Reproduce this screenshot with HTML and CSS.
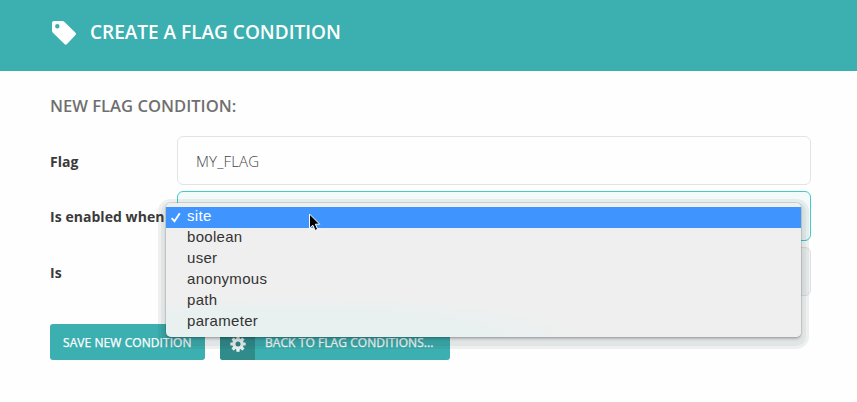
FILE: index.html
```html
<!DOCTYPE html>
<html lang="en">
<head>
<meta charset="utf-8">
<title>Create a flag condition</title>
<link rel="stylesheet" href="styles.css">
</head>
<body>
<header class="topbar">
  <svg class="tag" width="26" height="26" viewBox="0 0 26 26"><path fill="#fff" fill-rule="evenodd" d="M3 1h8.200q1.400 0 2.300.9l11 10.800q1.100 1.200 0 2.300l-8.700 9.300q-1 .9-2.100 0L1.900 12.800Q1 11.900 1 10.600V3q0-2 2-2zM6.300 4a2.200 2.200 0 1 0 0 4.400 2.200 2.200 0 0 0 0-4.400z"/></svg>
  <h1 class="title">CREATE A FLAG CONDITION</h1>
</header>
<main class="content">
  <h2 class="subtitle">NEW FLAG CONDITION:</h2>
  <form class="form">
    <div class="row"><span class="label">Flag</span><div class="field">MY_FLAG</div></div>
    <div class="row"><span class="label">Is enabled when</span><div class="field active"></div></div>
    <div class="row"><span class="label">Is</span><div class="field disabled"></div></div>
  </form>
  <div class="actions">
    <div class="button save">SAVE NEW CONDITION</div>
    <div class="button back">
      <span class="gear"><svg width="16" height="16" viewBox="-8 -8 16 16"><g fill="#f4f7f7"><circle r="5.700"/><g id="teeth"><rect x="-1.600" y="-7.700" width="3.200" height="15.400" rx=".5"/><rect x="-7.700" y="-1.600" width="15.400" height="3.200" rx=".5"/></g><use href="#teeth" transform="rotate(45)"/></g><circle r="2.500" fill="#2f8886"/></svg></span>
      <span class="back-text">BACK TO FLAG CONDITIONS...</span>
    </div>
  </div>
</main>
<ul class="menu">
  <li class="option selected"><svg class="check" width="12" height="12" viewBox="0 0 12 12"><path d="M1.700 6.200 4.500 9.300 9.800 1.300" fill="none" stroke="#fff" stroke-width="1.900"/></svg>site</li>
  <li class="option">boolean</li>
  <li class="option">user</li>
  <li class="option">anonymous</li>
  <li class="option">path</li>
  <li class="option">parameter</li>
</ul>
<svg class="cursor" width="14" height="21" viewBox="0 0 14 21"><path d="M1.500 1v14.200l3.300-3 2.300 5.200 2.600-1.100-2.300-5.100h4.300z" fill="#000" stroke="#fff" stroke-width="1"/></svg>
</body>
</html>
```
FILE: styles.css
```css
* { box-sizing: border-box; }
body { margin: 0; height: 402px; overflow: hidden; background: #fefefe; font-family: "Open Sans", sans-serif; color: #3a3a3a; }
.topbar { display: flex; align-items: center; height: 71px; padding: 0 0 5px 51px; background: #3cafb0; }
.tag { flex: none; margin-right: 13px; }
.title { margin: -2px 0 0; font-size: 19px; font-weight: 600; color: #fff; line-height: 26px; }
.content { padding: 23px 46px 0 50px; }
.subtitle { margin: 0 0 18px; font-size: 16.6px; line-height: 24px; font-weight: 600; color: #707070; }
.form { display: grid; grid-template-rows: 49px 50px 49px; gap: 6px; }
.row { display: grid; grid-template-columns: 127px 634px; align-items: center; }
.label { font-size: 14px; font-weight: 700; letter-spacing: .05px; line-height: 20px; padding-top: 2px; white-space: nowrap; }
.field { height: 100%; display: flex; align-items: center; border: 1px solid #e3e5e5; border-radius: 6px; padding: 0 18px; font-size: 15px; font-weight: 300; letter-spacing: .15px; color: #444; }
.field.active { border-color: #45c9c9; background: #f2fbfa; }
.field.disabled { background: #f3f4f4; border-color: #dfe1e1; }
.actions { display: flex; gap: 15px; margin-top: 28px; }
.button { display: flex; align-items: center; height: 36px; border-radius: 3px; background: #3cafb0; color: #fff; font-size: 12px; letter-spacing: .07px; overflow: hidden; white-space: nowrap; -webkit-text-stroke: .25px #fff; }
.save { width: 155px; padding-left: 13px; }
.back { width: 230px; }
.gear { display: flex; align-items: center; justify-content: center; width: 35px; height: 36px; padding-top: 4px; background: #2f8c8b; }
.back-text { padding-left: 10px; }
.menu { position: absolute; left: 166px; top: 203px; width: 635px; height: 134px; margin: 0; padding: 4px 0; list-style: none; border-radius: 5px; background: radial-gradient(ellipse 290px 42px at 130px 134px, #e8f0f0 60%, #efefef 100%); font: 15px/21px "Liberation Sans", sans-serif; letter-spacing: .3px; color: #333; box-shadow: 0 0 0 1px rgba(0,0,0,.08), 0 2px 3px rgba(0,0,0,.22), 0 4px 0 5px rgba(30,50,50,.055), 0 4px 0 8px rgba(30,50,50,.07); }
.option { height: 21px; padding-left: 21px; position: relative; line-height: 17px; }
.selected { background: #3f94fd; color: #fff; }
.check { position: absolute; left: 4px; top: 5px; }
.cursor { position: absolute; left: 308px; top: 213px; }
```
